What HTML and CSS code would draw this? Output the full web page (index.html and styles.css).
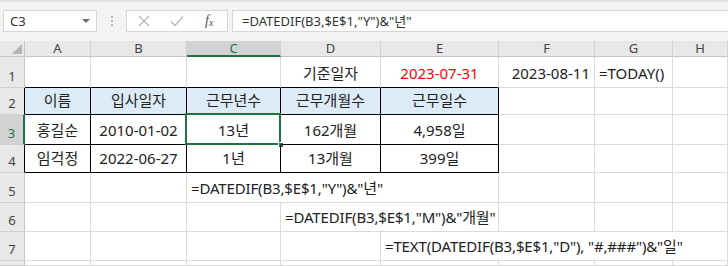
FILE: index.html
```html
<!doctype html>
<html>
<head>
	<meta charset="utf-8">
	<title>근무기간 계산</title>
	<link rel="stylesheet" href="styles.css">
</head>
<body>
	<div class="toolbar">
		<div class="namebox">
			<span>C3</span>
			<svg class="drop" width="8" height="5" viewBox="0 0 8 5"><path d="M0 0h8L4 4z" fill="#6b6b6b"/></svg>
		</div>
		<div class="dots"><i></i><i></i><i></i></div>
		<div class="fbuttons">
			<svg width="12" height="12" viewBox="0 0 12 12"><path d="M1 1l10 10M11 1L1 11" stroke="#b9b9b9" stroke-width="1.3"/></svg>
			<svg width="14" height="12" viewBox="0 0 14 12"><path d="M1 6.5l4 4L13 1.5" stroke="#b9b9b9" stroke-width="1.3" fill="none"/></svg>
			<span class="fx">f<sub>x</sub></span>
		</div>
		<div class="formula">=DATEDIF(B3,$E$1,"Y")&amp;"년"</div>
	</div>

	<div class="sheet">
		<!-- column headers -->
		<div class="corner"><svg width="10" height="10" viewBox="0 0 10 10"><path d="M10 0v10H0z" fill="#b4b4b4"/></svg></div>
		<div class="colhead">A</div>
		<div class="colhead">B</div>
		<div class="colhead sel">C</div>
		<div class="colhead">D</div>
		<div class="colhead">E</div>
		<div class="colhead">F</div>
		<div class="colhead">G</div>
		<div class="colhead">H</div>

		<!-- row 1 -->
		<div class="rowhead">1</div>
		<div class="cell btm"></div>
		<div class="cell btm"></div>
		<div class="cell btm"></div>
		<div class="cell btm center">기준일자</div>
		<div class="cell btm center red">2023-07-31</div>
		<div class="cell right">2023-08-11</div>
		<div class="cell">=TODAY()</div>
		<div class="cell"></div>

		<!-- row 2 -->
		<div class="rowhead tbl">2</div>
		<div class="cell box head center">이름</div>
		<div class="cell box head center">입사일자</div>
		<div class="cell box head center">근무년수</div>
		<div class="cell box head center">근무개월수</div>
		<div class="cell box head center">근무일수</div>
		<div class="cell"></div>
		<div class="cell"></div>
		<div class="cell"></div>

		<!-- row 3 -->
		<div class="rowhead selrow">3</div>
		<div class="cell box center">홍길순</div>
		<div class="cell box center">2010-01-02</div>
		<div class="cell box center active">13년<span class="selbox"></span><span class="handle"></span></div>
		<div class="cell box center">162개월</div>
		<div class="cell box center">4,958일</div>
		<div class="cell"></div>
		<div class="cell"></div>
		<div class="cell"></div>

		<!-- row 4 -->
		<div class="rowhead tbl">4</div>
		<div class="cell box center">임걱정</div>
		<div class="cell box center">2022-06-27</div>
		<div class="cell box center">1년</div>
		<div class="cell box center">13개월</div>
		<div class="cell box center">399일</div>
		<div class="cell"></div>
		<div class="cell"></div>
		<div class="cell"></div>

		<!-- row 5 -->
		<div class="rowhead">5</div>
		<div class="cell"></div>
		<div class="cell"></div>
		<div class="cell span3 fml">=DATEDIF(B3,$E$1,"Y")&amp;"년"</div>
		<div class="cell"></div>
		<div class="cell"></div>
		<div class="cell"></div>

		<!-- row 6 -->
		<div class="rowhead">6</div>
		<div class="cell"></div>
		<div class="cell"></div>
		<div class="cell"></div>
		<div class="cell span2 fml">=DATEDIF(B3,$E$1,"M")&amp;"개월"</div>
		<div class="cell"></div>
		<div class="cell"></div>
		<div class="cell"></div>

		<!-- row 7 -->
		<div class="rowhead">7</div>
		<div class="cell"></div>
		<div class="cell"></div>
		<div class="cell"></div>
		<div class="cell"></div>
		<div class="cell span4 fml">=TEXT(DATEDIF(B3,$E$1,"D"), "#,###")&amp;"일"</div>

		<!-- row 8 -->
		<div class="rowhead"></div>
		<div class="cell"></div>
		<div class="cell"></div>
		<div class="cell"></div>
		<div class="cell"></div>
		<div class="cell"></div>
		<div class="cell"></div>
		<div class="cell"></div>
		<div class="cell"></div>
	</div>
</body>
</html>
```

FILE: styles.css
```css
body {
	margin: 0;
	width: 728px;
	height: 266px;
	overflow: hidden;
	font-family: "Noto Sans", "Noto Sans CJK KR", sans-serif;
	color: #222;
	background: #fff;
}

/* formula bar */

.toolbar {
	height: 41px;
	box-sizing: border-box;
	background: #f3f3f3;
	border-top: 2px solid #e2e2e2;
	display: flex;
	align-items: flex-start;
	padding: 8px 0 0 3px;
}

.namebox {
	width: 94px;
	height: 22px;
	box-sizing: border-box;
	background: #fff;
	border: 1px solid #d6d6d6;
	display: flex;
	align-items: center;
	justify-content: space-between;
	padding: 0 6px 0 6px;
	font-size: 13px;
	color: #333;
}

.dots {
	width: 29px;
	height: 22px;
	display: flex;
	flex-direction: column;
	align-items: center;
	justify-content: center;
	gap: 2px;
}

.dots i {
	width: 2px;
	height: 2px;
	background: #b8b8b8;
}

.fbuttons {
	width: 102px;
	height: 22px;
	box-sizing: border-box;
	background: #fff;
	border: 1px solid #d6d6d6;
	display: flex;
	align-items: center;
	padding: 0 0 0 11px;
	gap: 20px;
}

.fx {
	font-family: "Liberation Serif", serif;
	font-style: italic;
	font-size: 14px;
	color: #555;
	margin-left: 1px;
}

.fx sub {
	font-size: 10px;
	vertical-align: -1px;
}

.formula {
	flex: 1;
	margin-left: 4px;
	height: 22px;
	box-sizing: border-box;
	background: #fff;
	border: 1px solid #d6d6d6;
	border-right: none;
	font-size: 13px;
	line-height: 20px;
	padding-left: 9px;
	color: #333;
}

/* sheet grid */

.sheet {
	display: grid;
	grid-template-columns: 25px 66px 96px 94px 100px 118px 96px 78px 55px;
	grid-template-rows: 16px 31px 27px 30px 28px 30px 29px 29px 5px;
}

.corner,
.colhead,
.rowhead {
	background: #e8e8e8;
	color: #444;
	font-size: 13px;
	box-sizing: border-box;
}

.corner {
	border-right: 1px solid #c6c6c6;
	border-bottom: 1px solid #c6c6c6;
	display: flex;
	align-items: flex-end;
	justify-content: flex-end;
	padding: 0 2px 2px 0;
}

.colhead {
	border-right: 1px solid #d0d0d0;
	border-bottom: 1px solid #c6c6c6;
	display: flex;
	align-items: center;
	justify-content: center;
	line-height: 15px;
}

.colhead.sel {
	background: #d3d3d3;
	color: #217346;
	border-bottom: 2px solid #217346;
}

.rowhead {
	border-right: 1px solid #c6c6c6;
	border-bottom: 1px solid #d0d0d0;
	display: flex;
	align-items: flex-end;
	justify-content: center;
	padding-bottom: 3px;
	line-height: 15px;
}

.rowhead.tbl {
	border-right-color: #000;
}

.rowhead.selrow {
	background: #d3d3d3;
	color: #217346;
	border-right: 2px solid #217346;
}

.cell {
	position: relative;
	box-sizing: border-box;
	border-right: 1px solid #dadada;
	border-bottom: 1px solid #dadada;
	display: flex;
	align-items: flex-end;
	padding: 0 4px 4px 4px;
	font-size: 15px;
	line-height: 20px;
	white-space: nowrap;
}

.fml {
	letter-spacing: -0.15px;
}

.center {
	justify-content: center;
}

.right {
	justify-content: flex-end;
}

.red {
	color: #ff0000;
}

.btm {
	border-bottom-color: #000;
}

.box {
	border-right-color: #000;
	border-bottom-color: #000;
}

.head {
	background: #ddebf7;
}

.span2 {
	grid-column: span 2;
}

.span3 {
	grid-column: span 3;
}

.span4 {
	grid-column: span 4;
}

/* active cell */

.selbox {
	position: absolute;
	left: -2px;
	top: -2px;
	right: -1px;
	bottom: -1px;
	border: 2px solid #217346;
}

.handle {
	position: absolute;
	right: -4px;
	bottom: -4px;
	width: 6px;
	height: 6px;
	background: #217346;
	border: 1px solid #fff;
	box-sizing: border-box;
}
```
